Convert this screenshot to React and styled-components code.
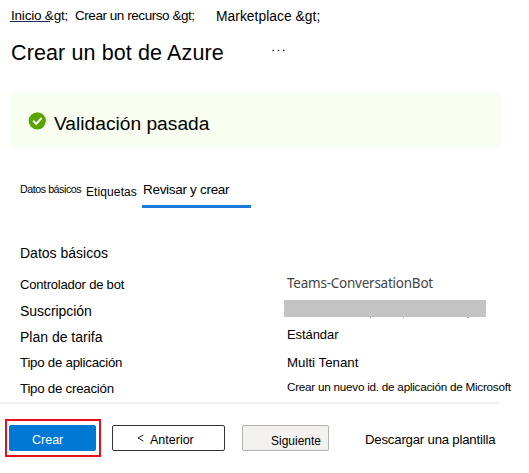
import React from 'react';
import styled, { createGlobalStyle } from 'styled-components';

const GlobalStyle = createGlobalStyle`
  * { box-sizing: border-box; }
  body {
    margin: 0;
    background: #fff;
    color: #000;
    font-family: "Liberation Sans", Arial, sans-serif;
  }
`;

const Page = styled.main`
  width: 529px;
  height: 473px;
  overflow: hidden;
  display: flex;
  flex-direction: column;
`;

const Text = styled.span`
  display: block;
  flex: none;
  font-size: ${(p) => p.$size || 13}px;
  letter-spacing: ${(p) => p.$track || 0}px;
  line-height: 20px;
  white-space: nowrap;
  margin-top: ${(p) => p.$drop || 0}px;
`;

const Breadcrumbs = styled.nav`
  display: flex;
  align-items: flex-start;
  height: 36px;
  padding: 6px 0 0 11px;
`;

const Crumb = styled(Text)`
  width: ${(p) => p.$width}px;
`;

const HomeLink = styled.span`
  display: inline-block;
  height: 16px;
  width: 40px;
  margin-left: -1px;
  padding-left: 1px;
  border-bottom: 1px solid #1b2c5c;
`;

const TitleBar = styled.header`
  display: flex;
  height: 57px;
  padding-left: 11px;
`;

const Title = styled.h1`
  margin: 1px 0 0;
  width: 261px;
  font-size: 21.5px;
  font-weight: 400;
  line-height: 33px;
  letter-spacing: 0.12px;
`;

const MoreIcon = styled.svg`
  width: 13px;
  height: 3px;
  margin-top: 13px;
`;

const Banner = styled.section`
  display: flex;
  align-items: flex-start;
  width: 489px;
  height: 54px;
  margin-left: 11px;
  padding: 19px 0 0 17px;
  background: #f8fff0;
`;

const CheckIcon = styled.svg`
  width: 18px;
  height: 18px;
  margin-right: 8px;
`;

const Tabs = styled.nav`
  display: flex;
  height: 61px;
  margin-top: 32px;
  padding-left: 20px;
`;

const Tab = styled.div`
  width: ${(p) => p.$width}px;
  height: 29px;
  border-bottom: ${(p) => (p.$active ? '3px solid #1b7bdc' : '0')};
  padding-left: ${(p) => (p.$active ? 1 : 0)}px;
`;

const Details = styled.section`
  height: 162px;
  padding-left: 20px;
`;

const SectionTitle = styled.h2`
  margin: 0;
  height: 34px;
  padding-top: 3px;
  font-size: 14px;
  font-weight: 400;
  line-height: 20px;
`;

const Row = styled.div`
  display: grid;
  grid-template-columns: 267px 1fr;
  height: ${(p) => p.$height || 26}px;
`;

const BotName = styled(Text)`
  font-family: "Noto Sans", "Open Sans", sans-serif;
  color: #444;
`;

const Redacted = styled.div`
  width: 202px;
  height: 17px;
  margin: -1px 0 0 -3px;
  background: #c3c3c3;

  &::after {
    content: '';
    display: block;
    width: 1px;
    height: 1px;
    margin-left: 86px;
    background: #888;
    box-shadow: 33px 0 #aaa, 97px 0 #aaa, 98px 0 #aaa;
    transform: translateY(17px);
  }
`;

const Footer = styled.footer`
  display: flex;
  align-items: flex-start;
  width: 529px;
  height: 69px;
  padding: 15px 0 0 5px;
`;

const Divider = styled.hr`
  flex: none;
  width: 499px;
  height: 2px;
  margin: 0;
  border: 0;
  background: #efefef;
`;

const Highlight = styled.div`
  width: 96px;
  height: 38px;
  padding: 4px 2px;
  border: 2px solid #e90f18;
`;

const Button = styled.button`
  display: flex;
  flex: none;
  width: ${(p) => p.$width}px;
  height: 26px;
  margin: ${(p) => p.$margin || '0'};
  padding: 3px 0 0 ${(p) => p.$inset}px;
  border: 1px solid ${(p) => p.$border};
  border-radius: 2px;
  background: ${(p) => p.$fill};
  color: ${(p) => p.$color || '#000'};
  font-family: inherit;
  text-align: left;
`;

const Chevron = styled.svg`
  width: 7px;
  height: 8px;
  margin: 5px 6px 0 0;
`;

const DownloadLink = styled(Text).attrs({ as: 'a' })`
  margin-left: 36px;
`;

export default function App() {
  return (
    <>
      <GlobalStyle />
      <Page>
        <Breadcrumbs>
          <Crumb $width={64} $size={13.5} $track={-0.2}><HomeLink>Inicio &amp;gt;</HomeLink></Crumb>
          <Crumb $width={141} $size={13.5} $track={-0.45}>Crear un recurso &amp;gt;</Crumb>
          <Crumb $width={110} $size={13.8} $track={0.05} $drop={1}>Marketplace &amp;gt;</Crumb>
        </Breadcrumbs>

        <TitleBar>
          <Title>Crear un bot de Azure</Title>
          <MoreIcon viewBox="0 0 13 3" fill="#222">
            <rect x="0.5" y="0.8" width="1.4" height="1.4" />
            <rect x="5.8" y="0.8" width="1.4" height="1.4" />
            <rect x="11" y="0.8" width="1.4" height="1.4" />
          </MoreIcon>
        </TitleBar>

        <Banner>
          <CheckIcon viewBox="0 0 18 18">
            <circle cx="9.3" cy="8.8" r="8.6" fill="#57a300" />
            <path d="M5.2 8.8 8.3 11.9 13.6 5.8" fill="none" stroke="#fff" strokeWidth="2" />
          </CheckIcon>
          <Text $size={19.2} $drop={2}>Validación pasada</Text>
        </Banner>

        <Tabs>
          <Tab $width={66}><Text $size={10.7} $track={-0.46}>Datos básicos</Text></Tab>
          <Tab $width={56}><Text $size={12} $track={0.1} $drop={3}>Etiquetas</Text></Tab>
          <Tab $width={109} $active><Text $size={13.5} $track={-0.3} $drop={1}>Revisar y crear</Text></Tab>
        </Tabs>

        <Details>
          <SectionTitle>Datos básicos</SectionTitle>
          <Row $height={27}>
            <Text $track={-0.2} $drop={1}>Controlador de bot</Text>
            <BotName $size={13.5} $track={-0.24} $drop={-1}>Teams-ConversationBot</BotName>
          </Row>
          <Row $height={25}>
            <Text $size={14} $track={-0.05}>Suscripción</Text>
            <Redacted />
          </Row>
          <Row>
            <Text $size={14} $drop={1}>Plan de tarifa</Text>
            <Text $track={-0.08} $drop={-1}>Estándar</Text>
          </Row>
          <Row>
            <Text $size={13.3} $track={-0.25} $drop={1}>Tipo de aplicación</Text>
            <Text $size={13.3} $drop={1}>Multi Tenant</Text>
          </Row>
          <Row $height={23}>
            <Text $size={13.3} $track={-0.25} $drop={1}>Tipo de creación</Text>
            <Text $size={11.7} $track={-0.24} $drop={-1}>Crear un nuevo id. de aplicación de Microsoft</Text>
          </Row>
        </Details>

        <Divider />
        <Footer>
          <Highlight>
            <Button $width={87} $inset={22} $border="#0078d4" $fill="#0078d4" $color="#fff">
              <Text $size={12.5} $drop={1}>Crear</Text>
            </Button>
          </Highlight>
          <Button $width={113} $inset={24} $margin="6px 0 0 11px" $border="#333" $fill="#fff">
            <Chevron viewBox="0 0 7 8" fill="none" stroke="#222">
              <path d="M6.4 1 1 4 6.4 7" />
            </Chevron>
            <Text $size={12.5} $drop={1}>Anterior</Text>
          </Button>
          <Button $width={87} $inset={28} $margin="6px 0 0 17px" $border="#b3b0ad" $fill="#f3f2f1">
            <Text $size={12} $drop={2}>Siguiente</Text>
          </Button>
          <DownloadLink $size={13.2} $track={-0.2} $drop={11}>Descargar una plantilla</DownloadLink>
        </Footer>
      </Page>
    </>
  );
}
